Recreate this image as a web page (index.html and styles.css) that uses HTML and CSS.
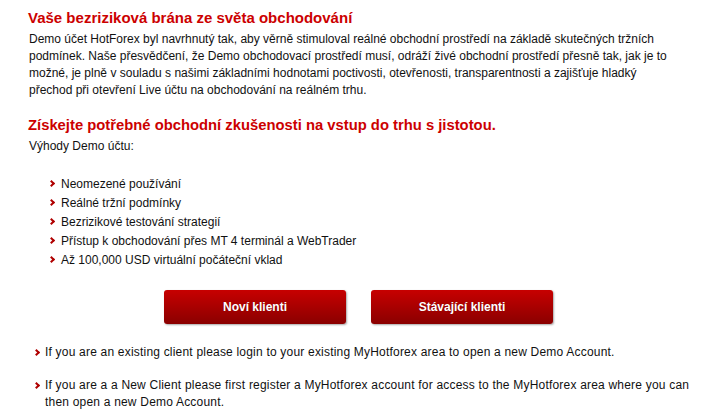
FILE: index.html
```html
<!DOCTYPE html>
<html>
<head>
<meta charset="utf-8">
<link rel="stylesheet" href="styles.css">
</head>
<body>
<div class="page">
  <h1 class="title">Vaše bezriziková brána ze světa obchodování</h1>
  <p class="intro">Demo účet HotForex byl navrhnutý tak, aby věrně stimuloval reálné obchodní prostředí na základě skutečných tržních podmínek. Naše přesvědčení, že Demo obchodovací prostředí musí, odráží živé obchodní prostředí přesně tak, jak je to možné, je plně v souladu s našimi základními hodnotami poctivosti, otevřenosti, transparentnosti a zajišťuje hladký přechod při otevření Live účtu na obchodování na reálném trhu.</p>
  <h2 class="title title-2">Získejte potřebné obchodní zkušenosti na vstup do trhu s jistotou.</h2>
  <p class="lead">Výhody Demo účtu:</p>
  <ul class="benefits">
    <li>Neomezené používání</li>
    <li>Reálné tržní podmínky</li>
    <li>Bezrizikové testování strategií</li>
    <li>Přístup k obchodování přes MT 4 terminál a WebTrader</li>
    <li>Až 100,000 USD virtuální počáteční vklad</li>
  </ul>
  <div class="buttons">
    <a class="btn">Noví klienti</a>
    <a class="btn">Stávající klienti</a>
  </div>
  <ul class="notes">
    <li>If you are an existing client please login to your existing MyHotforex area to open a new Demo Account.</li>
    <li>If you are a a New Client please first register a MyHotforex account for access to the MyHotforex area where you can then open a new Demo Account.</li>
  </ul>
</div>
</body>
</html>
```
FILE: styles.css
```css
html, body { margin: 0; padding: 0; background: #fff; }
body { font-family: "Liberation Sans", Arial, sans-serif; font-size: 12px; color: #111; }
.page { padding: 9px 32px 0 28px; }
.title { margin: 0; font-size: 15px; font-weight: bold; color: #cc0000; line-height: 18px; }
.intro { margin: 4px 0 0 1px; line-height: 17px; }
.title-2 { margin-top: 17px; font-size: 14.8px; }
.lead { margin: 4px 0 0 1px; line-height: 17px; }
.benefits { list-style: none; margin: 20px 0 0 0; padding: 0 0 0 21px; }
.benefits li, .notes li { position: relative; padding-left: 12px; line-height: 19px; }
.benefits li::before, .notes li::before {
  content: ""; position: absolute; left: 0; top: 6px;
  width: 3px; height: 3px; border-top: 2px solid #b00000; border-right: 2px solid #b00000;
  transform: rotate(45deg);
}
.buttons { display: flex; gap: 25px; margin: 20px 0 0 136px; }
.btn {
  display: flex; align-items: center; justify-content: center;
  width: 182px; height: 34px; border-radius: 3px;
  background: linear-gradient(#c70000, #8a0000);
  color: #fff; font-weight: bold; font-size: 12px;
  box-shadow: 1px 1px 2px rgba(0,0,0,0.35);
  text-shadow: 0 0 1px rgba(0,0,0,0.3);
}
.notes { list-style: none; margin: 20px -10px 0 6px; padding: 0; letter-spacing: 0.2px; }
.notes li { padding-left: 11px; line-height: 17px; margin-bottom: 16px; }
.notes li::before { top: 6px; }
```
